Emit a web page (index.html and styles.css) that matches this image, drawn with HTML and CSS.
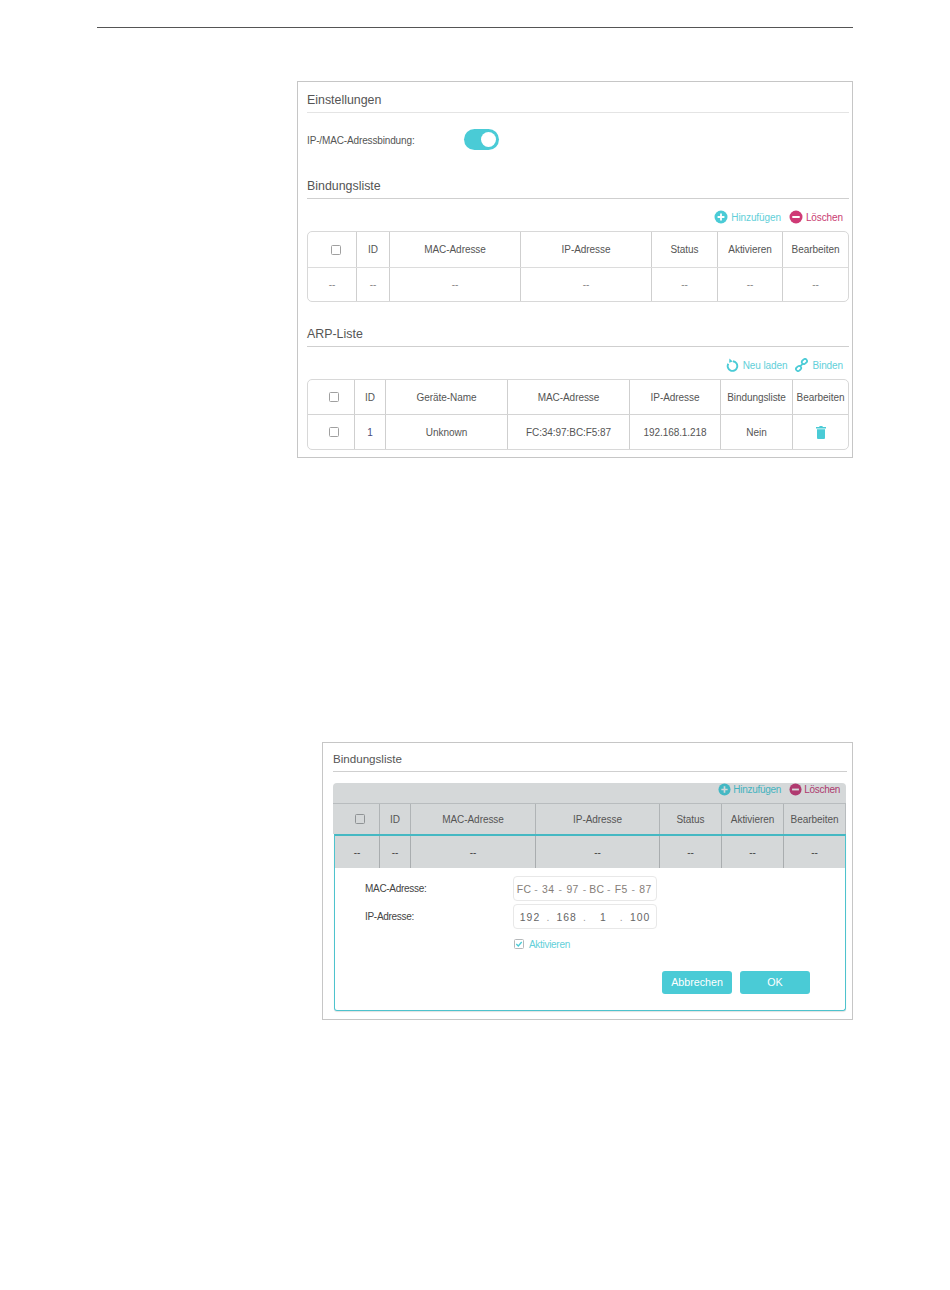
FILE: index.html
```html
<!DOCTYPE html>
<html lang="de">
<head>
<meta charset="utf-8">
<title>Bindungsliste</title>
<link rel="stylesheet" href="styles.css">
</head>
<body>
<hr class="top-rule">

<section class="panel panel-main">
  <h2 class="heading">Einstellungen</h2>
  <div class="toggle-row">
    <span class="toggle-label">IP-/MAC-Adressbindung:</span>
    <span class="toggle"><span class="knob"></span></span>
  </div>

  <h2 class="heading heading-next">Bindungsliste</h2>
  <div class="actions">
    <span class="action teal">
      <svg class="icon" viewBox="0 0 14 14"><circle cx="7" cy="7" r="6.5" fill="#4acbd6"/><path d="M7 3.6v6.8M3.6 7h6.8" stroke="#fff" stroke-width="1.8"/></svg>Hinzufügen</span>
    <span class="action pink">
      <svg class="icon" viewBox="0 0 14 14"><circle cx="7" cy="7" r="6.5" fill="#cf3a76"/><path d="M3.3 7h7.4" stroke="#fff" stroke-width="2"/></svg>Löschen</span>
  </div>
  <div class="table">
    <div class="row cols-a row-head">
      <div class="cell"><span class="check"></span></div><div class="cell">ID</div><div class="cell">MAC-Adresse</div><div class="cell">IP-Adresse</div><div class="cell">Status</div><div class="cell">Aktivieren</div><div class="cell">Bearbeiten</div>
    </div>
    <div class="row cols-a row-body">
      <div class="cell dash">--</div><div class="cell dash">--</div><div class="cell dash">--</div><div class="cell dash">--</div><div class="cell dash">--</div><div class="cell dash">--</div><div class="cell dash">--</div>
    </div>
  </div>

  <h2 class="heading heading-arp">ARP-Liste</h2>
  <div class="actions">
    <span class="action teal">
      <svg class="icon icon-sm" viewBox="0 0 13 14"><path d="M7 3.3a4.8 4.8 0 1 1-4.7 2.4" fill="none" stroke="#4acbd6" stroke-width="1.9"/><path d="M3.4 .4L6.8 3.4 3.2 4.8z" fill="#4acbd6"/></svg>Neu laden</span>
    <span class="action teal">
      <svg class="icon icon-sm" viewBox="0 0 13 13"><g fill="none" stroke="#4acbd6" stroke-width="1.7"><rect x="6.6" y="1" width="5.6" height="4" rx="2" transform="rotate(-40 9.4 3)"/><rect x=".8" y="8" width="5.6" height="4" rx="2" transform="rotate(-40 3.6 10)"/><path d="M4.8 8.2l3.4-3.4"/></g></svg>Binden</span>
  </div>
  <div class="table">
    <div class="row cols-b row-head-b">
      <div class="cell"><span class="check"></span></div><div class="cell">ID</div><div class="cell">Geräte-Name</div><div class="cell">MAC-Adresse</div><div class="cell">IP-Adresse</div><div class="cell">Bindungsliste</div><div class="cell">Bearbeiten</div>
    </div>
    <div class="row cols-b row-body-b">
      <div class="cell"><span class="check"></span></div><div class="cell id">1</div><div class="cell">Unknown</div><div class="cell">FC:34:97:BC:F5:87</div><div class="cell">192.168.1.218</div><div class="cell">Nein</div>
      <div class="cell"><svg class="trash" viewBox="0 0 10 13"><path d="M3.4 0h3.2v1H10v1.4H0V1h3.4zM1 3.2h8V12a1 1 0 0 1-1 1H2a1 1 0 0 1-1-1z" fill="#4acbd6"/></svg></div>
    </div>
  </div>
</section>

<section class="panel panel-edit">
  <h2 class="heading heading-edit">Bindungsliste</h2>
  <div class="shade">
    <div class="actions actions-shade">
      <span class="action teal-dim">
        <svg class="icon icon-shade" viewBox="0 0 14 14"><circle cx="7" cy="7" r="6.5" fill="#44b8c4"/><path d="M7 3.6v6.8M3.6 7h6.8" stroke="#d5d8d9" stroke-width="1.8"/></svg>Hinzufügen</span>
      <span class="action pink-dim">
        <svg class="icon icon-shade" viewBox="0 0 14 14"><circle cx="7" cy="7" r="6.5" fill="#b03a70"/><path d="M3.3 7h7.4" stroke="#d5d8d9" stroke-width="2"/></svg>Löschen</span>
    </div>
    <div class="row cols-c row-shade-head">
      <div class="cell"><span class="check check-shade"></span></div><div class="cell">ID</div><div class="cell">MAC-Adresse</div><div class="cell">IP-Adresse</div><div class="cell">Status</div><div class="cell">Aktivieren</div><div class="cell">Bearbeiten</div>
    </div>
  </div>
  <div class="edit-box">
    <div class="row cols-c row-shade-body">
      <div class="cell">--</div><div class="cell">--</div><div class="cell">--</div><div class="cell">--</div><div class="cell">--</div><div class="cell">--</div><div class="cell">--</div>
    </div>
    <form class="form">
      <span class="form-label">MAC-Adresse:</span>
      <div class="field field-mac"><span>FC</span><i>-</i><span>34</span><i>-</i><span>97</span><i>-</i><span>BC</span><i>-</i><span>F5</span><i>-</i><span>87</span></div>
      <span class="form-label">IP-Adresse:</span>
      <div class="field field-ip"><span>192</span><i>.</i><span>168</span><i>.</i><span>1</span><i>.</i><span>100</span></div>
      <div class="enable">
        <svg class="tick" viewBox="0 0 10 10"><rect x=".5" y=".5" width="9" height="9" rx="1" fill="#fff" stroke="#b5b8ba"/><path d="M2.3 5l2 2 3.4-4" fill="none" stroke="#4acbd6" stroke-width="1.3"/></svg>
        <span>Aktivieren</span>
      </div>
      <div class="buttons">
        <span class="btn">Abbrechen</span>
        <span class="btn">OK</span>
      </div>
    </form>
  </div>
</section>
</body>
</html>
```

FILE: styles.css
```css
* { box-sizing: border-box; }
html, body { margin: 0; padding: 0; background: #fff; }
body {
  width: 950px;
  height: 1290px;
  overflow: hidden;
  font-family: "Liberation Sans", Arial, sans-serif;
  font-size: 10px;
  color: #555;
}

.top-rule {
  margin: 27px 97px 0;
  border: 0;
  height: 1px;
  background: #555;
}

.panel {
  border: 1px solid #c6c6c6;
  margin-right: 97px;
}
.panel-main {
  margin-top: 53px;
  margin-left: 297px;
  height: 377px;
  padding: 0 3px 0 9px;
}
.panel-edit {
  margin-top: 284px;
  margin-left: 322px;
  height: 278px;
  padding: 0 5px 0 10px;
}

.heading {
  margin: 0;
  padding: 8px 0 2px;
  font-size: 12.4px;
  font-weight: 400;
  line-height: 20px;
  color: #555;
  border-bottom: 1px solid #e4e4e4;
}
.heading-next { margin-top: 18px; border-bottom-color: #cfcfcf; }
.heading-arp { margin-top: 14px; border-bottom-color: #cfcfcf; }
.heading-edit { padding-top: 6px; font-size: 11.6px; border-bottom-color: #cfcfcf; }

.toggle-row {
  display: flex;
  align-items: center;
  margin-top: 16px;
  height: 21px;
}
.toggle-label { width: 157px; padding-top: 1px; font-size: 10px; letter-spacing: -.14px; }
.toggle {
  display: flex;
  justify-content: flex-end;
  align-items: center;
  width: 35px;
  height: 21px;
  padding-right: 3px;
  border-radius: 11px;
  background: #4acbd6;
}
.knob { width: 15px; height: 15px; border-radius: 50%; background: #fff; }

.actions {
  display: flex;
  justify-content: flex-end;
  align-items: center;
  gap: 8px;
  height: 32px;
  padding: 4px 6px 0 0;
}
.action { display: flex; align-items: center; gap: 3px; font-size: 10px; letter-spacing: -.1px; }
.teal { color: #62cfd9; }
.pink { color: #c93a72; }
.teal-dim { color: #44b3bf; }
.pink-dim { color: #ad3a6e; }
.icon { display: block; width: 14px; height: 14px; }
.icon-sm { width: 13px; height: 14px; margin-right: 1px; }
.icon-shade { width: 13px; height: 13px; }

.table {
  border: 1px solid #d8d8d8;
  border-radius: 5px;
  width: 542px;
}
.row { display: grid; }
.cols-a { grid-template-columns: 49px 33px 131px 131px 66px 65px 65px; }
.cols-b { grid-template-columns: 47px 31px 122px 122px 91px 72px 55px; }
.cols-c { grid-template-columns: 45px 31px 125px 124px 62px 62px 1fr; }

.cell {
  display: flex;
  justify-content: center;
  align-items: center;
  border-right: 1px solid #cfcfcf;
  white-space: nowrap;
  letter-spacing: -.06px;
}
.cell:last-child { border-right: 0; }

.row-head { height: 36px; border-bottom: 1px solid #dcdcdc; }
.row-body { height: 33px; }
.row-head-b { height: 35px; border-bottom: 1px solid #d4d4d4; }
.row-body-b { height: 34px; }
.dash { color: #888; }
.id { color: #4a4a7a; }

.check {
  display: block;
  width: 10px;
  height: 10px;
  margin-left: 8px;
  border: 1px solid #a0a0a0;
  border-radius: 1.5px;
  background: #fff;
}
.cols-b .check { margin-left: 6px; }
.check-shade { margin-left: 6px; background: transparent; border-color: #8f9395; }
.trash { display: block; width: 10px; height: 13px; }

.shade {
  margin: 11px 1px 0 0;
  background: #d5d8d9;
  border-radius: 4px 4px 0 0;
}
.actions-shade {
  height: 20px;
  padding: 0 6px 7px 0;
}
.actions-shade .action { gap: 2px; letter-spacing: -.28px; }
.row-shade-head {
  height: 31px;
  padding-left: 2px;
  border-top: 1px solid #b8bcbe;
}
.row-shade-head .cell { border-right-color: #b0b4b6; }
.row-shade-head .cell:last-child { border-right: 1px solid #b8bcbe; }

.edit-box {
  height: 177px;
  margin: 0 1px 0 1px;
  border: 1px solid #4ec3cd;
  border-top: 2px solid #45b8c3;
  border-radius: 0 0 3px 3px;
  box-shadow: 0 1px 1px #e2e2e2;
}
.row-shade-body {
  height: 32px;
  background: #d5d8d9;
  color: #444;
}
.row-shade-body .cell { border-right-color: #a9adaf; }

.form {
  display: grid;
  grid-template-columns: 148px 144px;
  grid-auto-rows: 25px;
  row-gap: 3px;
  padding: 8px 35px 0 30px;
  align-items: center;
}
.form-label { color: #444; font-size: 10px; letter-spacing: -.3px; }
.field {
  display: grid;
  align-items: center;
  justify-items: center;
  height: 25px;
  padding-top: 1px;
  border: 1px solid #e8e8e8;
  border-radius: 4px;
  font-size: 10.4px;
  color: #666;
}
.field i { font-style: normal; color: #999; }
.field-mac {
  grid-template-columns: 14px 10.3px 14px 10.3px 14px 10.3px 14px 10.3px 14px 10.3px 14px;
  padding-left: 3px;
  letter-spacing: .4px;
  color: #857d78;
}
.field-ip {
  grid-template-columns: 30px 6.7px 30px 6.7px 30px 6.7px 30px;
  padding-left: 1px;
  letter-spacing: 1px;
}

.enable {
  grid-column: 2;
  display: flex;
  align-items: center;
  gap: 5px;
  margin-top: -1px;
  padding-left: 1px;
  color: #62cfd9;
  font-size: 10px;
  letter-spacing: -.3px;
}
.tick { display: block; width: 10px; height: 10px; }

.buttons {
  grid-column: 1 / -1;
  display: flex;
  justify-content: flex-end;
  gap: 8px;
  width: 445px;
  margin-top: 19px;
}
.btn {
  display: flex;
  justify-content: center;
  align-items: center;
  width: 70px;
  height: 23px;
  border-radius: 3px;
  background: #4acbd6;
  color: #fff;
  font-size: 10.7px;
}
```
